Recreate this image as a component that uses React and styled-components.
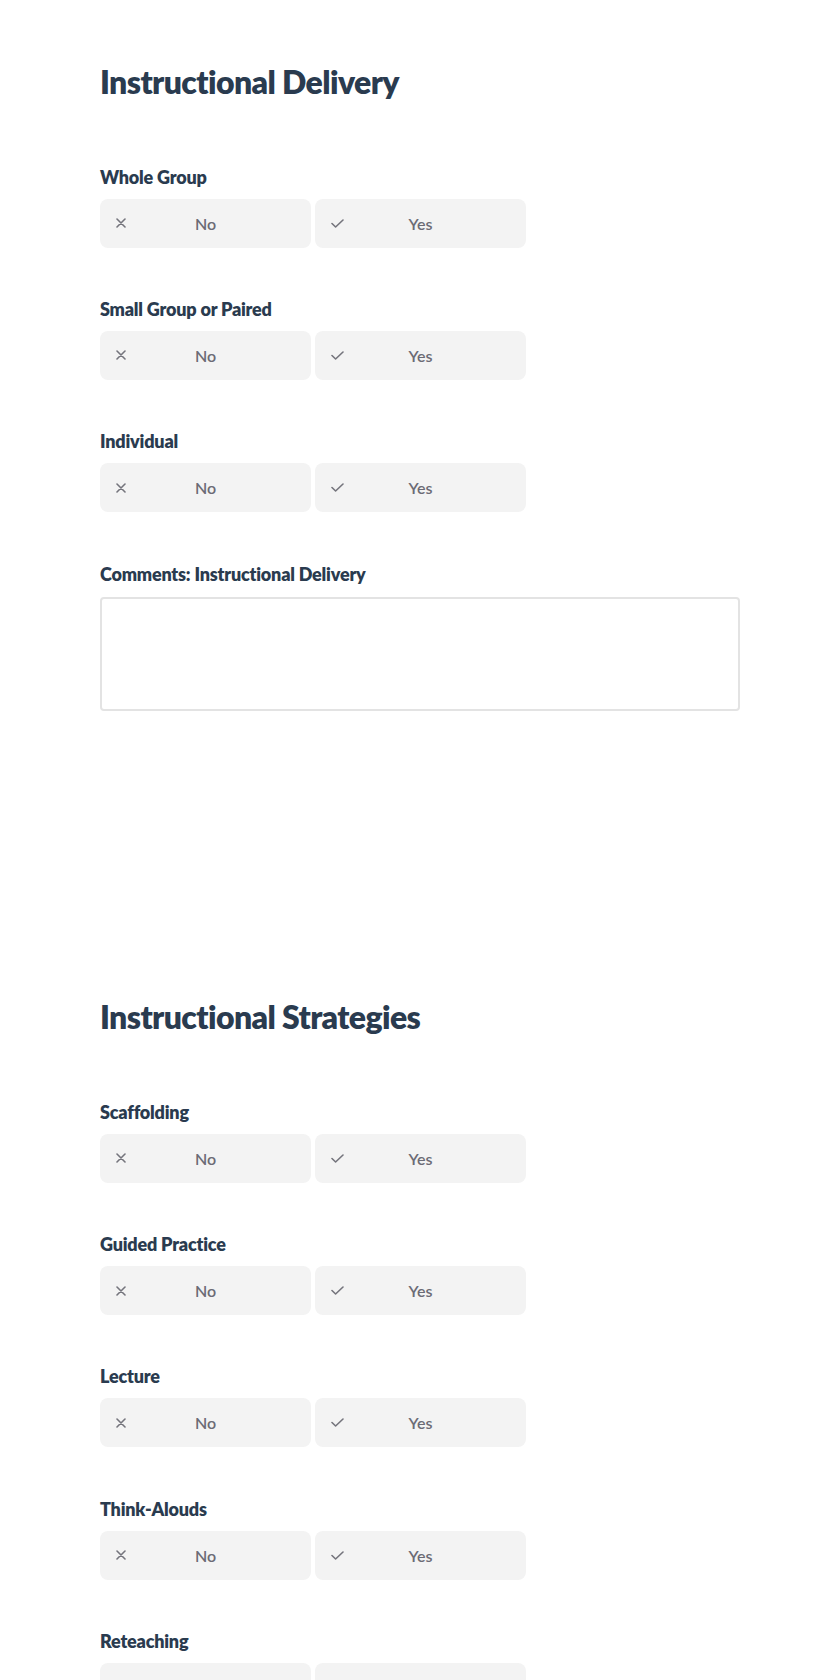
import React from "react";
import styled, { createGlobalStyle } from "styled-components";

const Global = createGlobalStyle`
  html, body { margin: 0; padding: 0; background: #ffffff; }
  body { font-family: Lato, "Noto Sans", "Liberation Sans", sans-serif; }
  * { box-sizing: border-box; }
`;

const Page = styled.main`
  width: 840px;
  padding-left: 100px;
`;

const Section = styled.section`
  width: 640px;
  padding: 63px 0 ${(p) => (p.$last ? 0 : 224.5)}px;
`;

const Heading = styled.h2`
  margin: 0 0 62.5px;
  font-size: 32px;
  line-height: 38px;
  font-weight: 800;
  letter-spacing: -0.6px;
  font-variant-ligatures: no-common-ligatures;
  color: #2a3b4f;
`;

const Fields = styled.div`
  display: flex;
  flex-direction: column;
  gap: 48.4px;
`;

const Field = styled.div`
  display: flex;
  flex-direction: column;
  gap: 8px;
`;

const Label = styled.label`
  font-size: 18px;
  line-height: 27px;
  font-weight: 800;
  letter-spacing: -0.2px;
  font-variant-ligatures: no-common-ligatures;
  color: #2a3b4f;
`;

const Choices = styled.div`
  display: flex;
  gap: 4px;
`;

const Choice = styled.button`
  width: 211px;
  height: 49px;
  padding: 0 16px;
  border: none;
  border-radius: 8px;
  background: #f3f3f3;
  display: grid;
  grid-template-columns: 1fr auto 1fr;
  align-items: center;
  font-family: inherit;
  font-size: 16px;
  font-weight: 600;
  color: #6b6b75;
  cursor: pointer;
`;

const IconSlot = styled.span`
  justify-self: start;
  display: flex;
  align-items: center;
`;

const Comments = styled.textarea`
  display: block;
  width: 640px;
  height: 114px;
  margin-top: 1px;
  border: 2px solid #e3e3e3;
  border-radius: 4px;
  resize: none;
  font-family: inherit;
  font-size: 16px;
  padding: 10px;
  outline: none;
`;

const XIcon = () => (
  <svg width="10" height="10" viewBox="0 0 10 10" fill="none">
    <path d="M1 1 L9 9 M9 1 L1 9" stroke="#74747c" strokeWidth="1.6" strokeLinecap="round" />
  </svg>
);

const CheckIcon = () => (
  <svg width="13" height="9" viewBox="0 0 13 9" fill="none">
    <path d="M1 4.5 L4.6 8 L12 1" stroke="#74747c" strokeWidth="1.6" strokeLinecap="round" strokeLinejoin="round" />
  </svg>
);

const YesNo = ({ label }) => (
  <Field>
    <Label>{label}</Label>
    <Choices>
      <Choice type="button">
        <IconSlot><XIcon /></IconSlot>
        <span>No</span>
        <span />
      </Choice>
      <Choice type="button">
        <IconSlot><CheckIcon /></IconSlot>
        <span>Yes</span>
        <span />
      </Choice>
    </Choices>
  </Field>
);

export default function App() {
  return (
    <>
      <Global />
      <Page>
        <Section>
          <Heading>Instructional Delivery</Heading>
          <Fields>
            <YesNo label="Whole Group" />
            <YesNo label="Small Group or Paired" />
            <YesNo label="Individual" />
            <Field>
              <Label>Comments: Instructional Delivery</Label>
              <Comments />
            </Field>
          </Fields>
        </Section>
        <Section $last>
          <Heading>Instructional Strategies</Heading>
          <Fields>
            <YesNo label="Scaffolding" />
            <YesNo label="Guided Practice" />
            <YesNo label="Lecture" />
            <YesNo label="Think-Alouds" />
            <YesNo label="Reteaching" />
            <YesNo label="Modeling" />
          </Fields>
        </Section>
      </Page>
    </>
  );
}
